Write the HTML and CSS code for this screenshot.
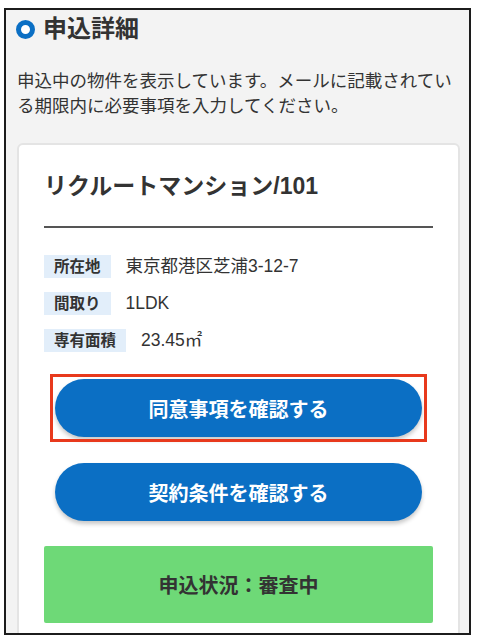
FILE: index.html
```html
<!DOCTYPE html>
<html lang="ja">
<head>
<meta charset="utf-8">
<title>申込詳細</title>
<link rel="stylesheet" href="styles.css">
</head>
<body>
<div class="frame">
  <h1 class="heading"><span class="ring"></span>申込詳細</h1>
  <p class="desc">申込中の物件を表示しています。メールに記載されている期限内に必要事項を入力してください。</p>
  <div class="card">
    <h2 class="card-title">リクルートマンション/101</h2>
    <hr class="rule">
    <dl class="info">
      <div class="row"><dt class="label">所在地</dt><dd class="value">東京都港区芝浦3-12-7</dd></div>
      <div class="row"><dt class="label">間取り</dt><dd class="value">1LDK</dd></div>
      <div class="row"><dt class="label">専有面積</dt><dd class="value">23.45㎡</dd></div>
    </dl>
    <div class="actions">
      <div class="btn-wrap highlight"><button class="btn">同意事項を確認する</button></div>
      <div class="btn-wrap"><button class="btn">契約条件を確認する</button></div>
    </div>
    <div class="status">申込状況：審査中</div>
  </div>
</div>
</body>
</html>
```

FILE: styles.css
```css
* { box-sizing: border-box; }
html, body { margin: 0; padding: 0; background: #fff; }
body {
  padding: 8px 0 0 4px;
  font-family: "Liberation Sans", "Noto Sans CJK JP", sans-serif;
  color: #333;
}
.frame {
  width: 467px;
  height: 627px;
  border: 2px solid #1c1c1c;
  background: #f3f3f3;
  overflow: hidden;
  padding: 3px 9px 0 11px;
}
.heading {
  display: flex;
  align-items: center;
  gap: 8px;
  margin: 0;
  font-size: 24px;
  line-height: 32px;
  font-weight: 700;
  color: #333;
}
.ring {
  width: 19px;
  height: 19px;
  margin-left: -1px;
  border-radius: 50%;
  border: 5px solid #0b6fc4;
  background: #fff;
  flex: none;
}
.desc {
  margin: 24px 0 0;
  font-size: 17.5px;
  line-height: 25px;
  color: #333;
}
.card {
  margin-top: 24px;
  background: #fff;
  border: 2px solid #e4e4e4;
  border-radius: 6px;
  padding: 25px 25px 30px;
}
.card-title {
  margin: 0;
  font-size: 23px;
  line-height: 32px;
  font-weight: 700;
  color: #333;
}
.rule {
  margin: 24px 0 0;
  border: 0;
  height: 2px;
  background: #555;
}
.info {
  margin: 27px 0 0;
  display: flex;
  flex-direction: column;
  gap: 14px;
}
.row {
  display: flex;
  align-items: center;
}
.label {
  background: #e2eefa;
  font-size: 15.5px;
  font-weight: 700;
  line-height: 23px;
  height: 23px;
  padding: 0 10px;
  color: #333;
}
.value {
  margin: 0 0 0 15px;
  font-size: 17.5px;
  line-height: 23px;
  color: #333;
}
.actions {
  margin: 27px 11px 0 11px;
  display: flex;
  flex-direction: column;
  gap: 26px;
}
.btn-wrap { position: relative; }
.highlight::after {
  content: "";
  position: absolute;
  inset: -5px;
  border: 3px solid #e8391c;
  pointer-events: none;
}
.btn {
  display: block;
  width: 100%;
  height: 58px;
  border: 0;
  border-radius: 29px;
  background: #0b6fc4;
  color: #fff;
  font-family: inherit;
  font-size: 20px;
  font-weight: 700;
  box-shadow: 0 3px 4px rgba(0, 0, 0, 0.22);
}
.status {
  margin-top: 25px;
  height: 77px;
  background: #6ed977;
  border-radius: 2px;
  display: flex;
  align-items: center;
  justify-content: center;
  font-size: 20px;
  font-weight: 700;
  color: #333;
}
```
